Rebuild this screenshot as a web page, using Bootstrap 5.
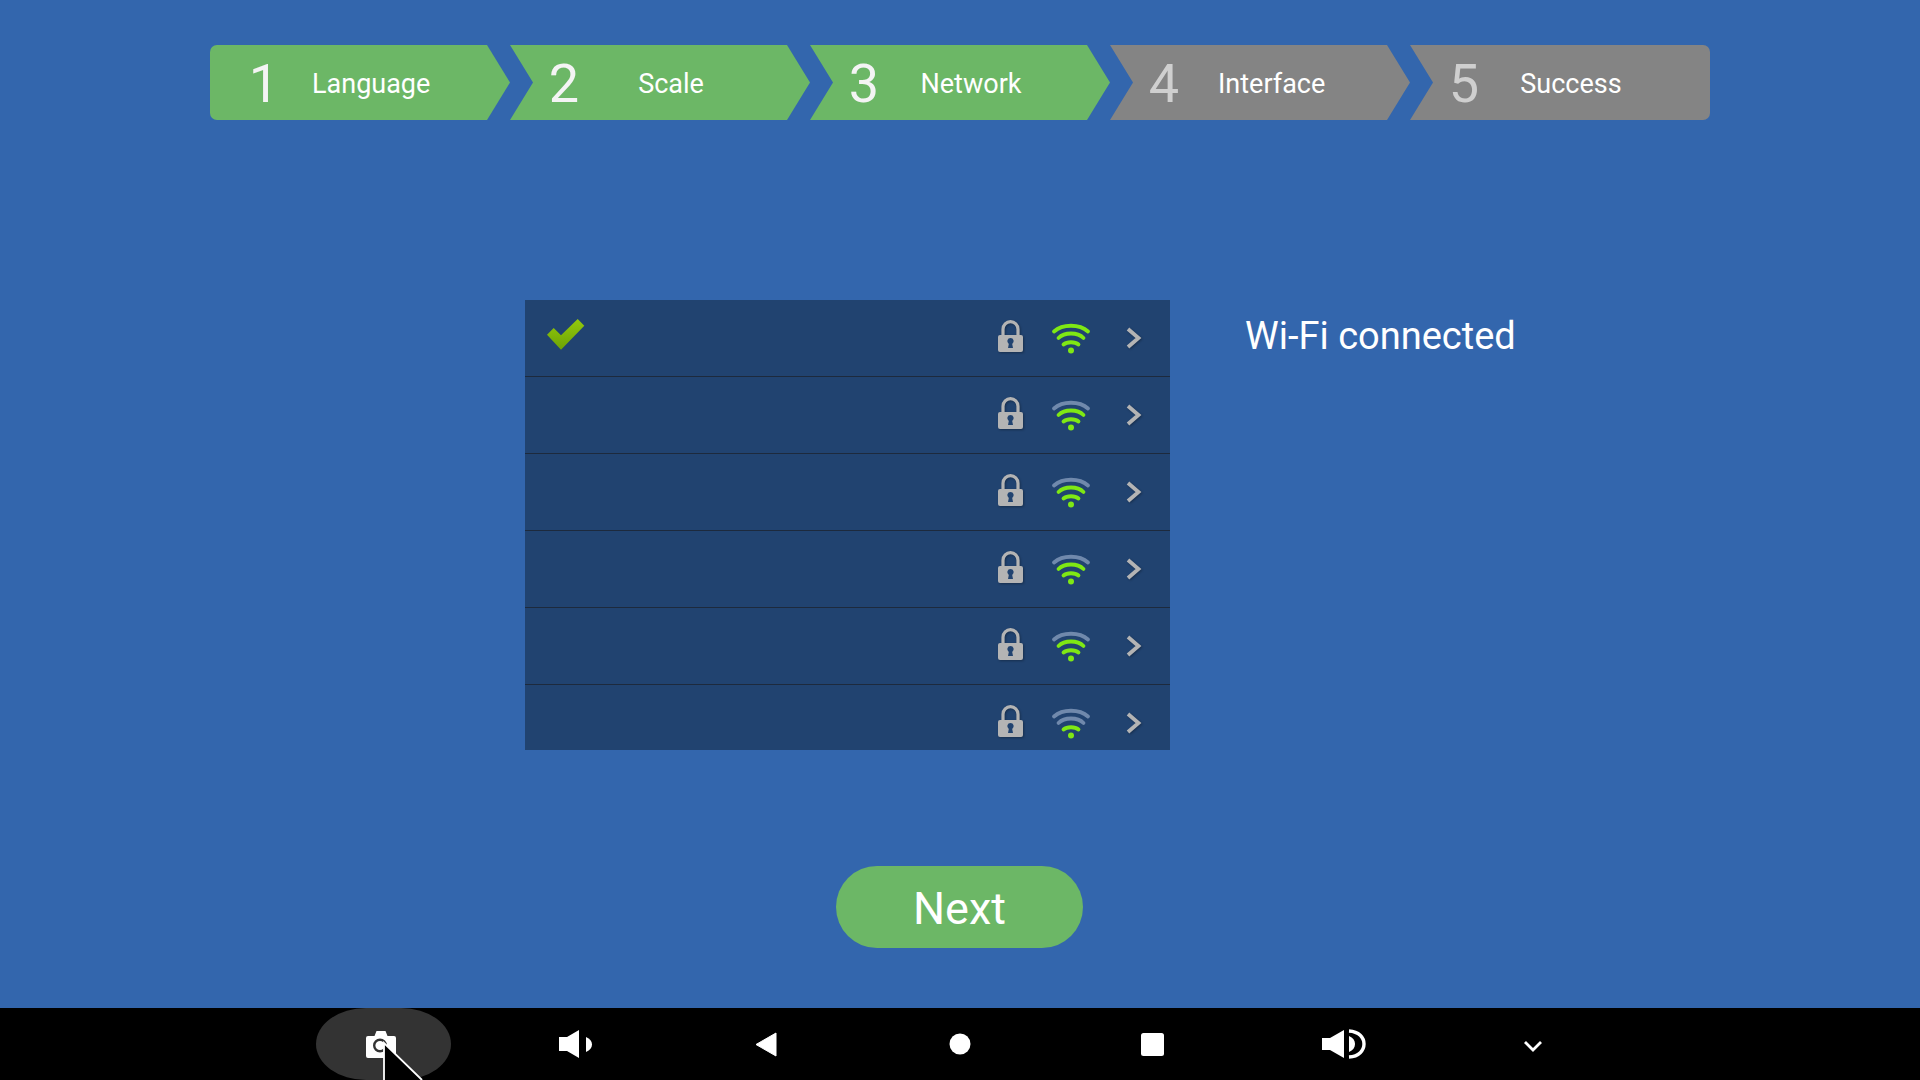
<!DOCTYPE html>
<html lang="en">
<head>
<meta charset="utf-8">
<title>Setup wizard - Network</title>
<link href="https://cdn.jsdelivr.net/npm/bootstrap@5.3.0/dist/css/bootstrap.min.css" rel="stylesheet">
<style>
html,body{height:100%}
body{background:#3366ad;font-family:Roboto,"Liberation Sans",sans-serif;overflow:hidden}
.wiz-page{height:1080px}
.wiz-steps{width:1500px;margin-top:45px}
.wiz-step{width:300px;height:75px;background:#6cb766;clip-path:polygon(0 0,277px 0,100% 50%,277px 100%,0 100%,23px 50%)}
.wiz-step.todo{background:#848484}
.wiz-step.todo .wiz-num{color:#cfcfcf}
.wiz-step:first-child{border-radius:7px 0 0 7px;clip-path:polygon(0 0,277px 0,100% 50%,277px 100%,0 100%)}
.wiz-step:last-child{border-radius:0 7px 7px 0;clip-path:polygon(0 0,100% 0,100% 100%,0 100%,23px 50%)}
.wiz-num{width:108px;font-size:54px;font-weight:400;line-height:77px;color:#f4f4f4}
.wiz-label{width:106px;font-size:27px;white-space:nowrap;line-height:79px}
.wiz-step:first-child .wiz-label{margin-left:-6px}
.wiz-mid{margin-top:180px;padding-left:525px}
.wifi-list{width:645px;height:450px;background:#214370;overflow:hidden}
.wifi-list .wifi-row{height:77px;flex:none;background:#214370;border-width:0 0 1px;border-style:solid;border-color:#1d2a3d;padding:20px 28px 0 22px}
.wifi-list .wifi-row:last-child{border-bottom:0}
.wifi-check{margin-top:-1px}
.wifi-lock{width:25px;height:32px;filter:drop-shadow(1px 1px 1px rgba(0,0,0,.3))}
.wifi-bars{width:40px;height:31px;margin-left:28px;margin-top:3px}
.wifi-go{width:16px;height:22px;margin-left:35px;margin-top:7px;filter:drop-shadow(1px 1px 1px rgba(0,0,0,.3))}
.arc-on{stroke:#7fe814;fill:none;stroke-width:3.8;stroke-linecap:round}
.arc-off{stroke:#7089ac;fill:none;stroke-width:3.8;stroke-linecap:round}
.wifi-status{font-size:38px;margin-left:75px;line-height:72px;white-space:nowrap}
.wiz-next{width:247px;height:82px;margin-top:116px;margin-right:1px;background:#6cb766;--bs-btn-bg:#6cb766;--bs-btn-border-width:0;--bs-btn-color:#fff;border-radius:41px;font-size:45px;line-height:82px;padding:2px 0 0}
.sys-bar{height:72px;background:#000}
.sys-btn{width:192px;height:72px;position:relative}
.sys-btn.on::before{content:"";position:absolute;left:28px;top:0;width:135px;height:72px;background:#333;border-radius:50px/36px}
.sys-btn svg{position:relative;display:block}
.sys-nudge{margin-right:6px}
.sys-cursor{position:absolute;left:381px;top:1041px}
</style>
</head>
<body>
<div class="wiz-page d-flex flex-column">
  <div class="flex-grow-1 d-flex flex-column">
    <div class="wiz-steps d-flex mx-auto text-white">
      <div class="wiz-step d-flex"><span class="wiz-num text-center">1</span><span class="wiz-label text-center">Language</span></div>
      <div class="wiz-step d-flex"><span class="wiz-num text-center">2</span><span class="wiz-label text-center">Scale</span></div>
      <div class="wiz-step d-flex"><span class="wiz-num text-center">3</span><span class="wiz-label text-center">Network</span></div>
      <div class="wiz-step todo d-flex"><span class="wiz-num text-center">4</span><span class="wiz-label text-center">Interface</span></div>
      <div class="wiz-step todo d-flex"><span class="wiz-num text-center">5</span><span class="wiz-label text-center">Success</span></div>
    </div>

    <svg width="0" height="0" class="position-absolute">
      <defs>
        <linearGradient id="chk" x1="0" y1="0" x2="0" y2="1"><stop offset="0" stop-color="#93c90c"/><stop offset="1" stop-color="#6da305"/></linearGradient>
        <symbol id="i-lock" viewBox="0 0 25 32"><path fill="none" stroke="#b4b4b4" stroke-width="3.2" d="M5 18V9.200a7.500 7.500 0 0 1 15 0V18"/><rect y="15" width="25" height="17" rx="2" fill="#b4b4b4"/><path fill="#214370" d="M12.500 18a3.200 3.200 0 0 1 1.700 5.900l.8 4.100h-5l.8-4.100a3.200 3.200 0 0 1 1.700-5.900z"/></symbol>
        <symbol id="i-go" viewBox="0 0 16 22"><path fill="none" stroke="#b4b4b4" stroke-width="3.800" d="M2 2l10.500 9L2 20"/></symbol>
      </defs>
    </svg>

    <div class="wiz-mid d-flex align-items-start text-white">
      <div class="wifi-list list-group rounded-0">
        <div class="wifi-row list-group-item d-flex align-items-start">
          <svg class="wifi-check" width="38" height="31" viewBox="0 0 38 31"><path fill="url(#chk)" d="M0 15.700L6.700 9 14 16.300 30.700 0l6.600 6.700L14 30.700z"/></svg>
          <svg class="wifi-lock ms-auto"><use href="#i-lock"/></svg>
          <svg class="wifi-bars" viewBox="0 0 40 31"><path class="arc-on" d="M3 8.500C11.500 .8 28.500 .8 37 8.500"/><path class="arc-on" d="M7.500 15C13.500 9 26.500 9 32.500 15"/><path class="arc-on" d="M12.500 21.500C16 18.500 24 18.500 27.500 21.500"/><circle cx="20" cy="27.500" r="3" fill="#7fe814"/></svg>
          <svg class="wifi-go"><use href="#i-go"/></svg>
        </div>
        <div class="wifi-row list-group-item d-flex align-items-start">
          <svg class="wifi-lock ms-auto"><use href="#i-lock"/></svg>
          <svg class="wifi-bars" viewBox="0 0 40 31"><path class="arc-off" d="M3 8.500C11.500 .8 28.500 .8 37 8.500"/><path class="arc-on" d="M7.500 15C13.500 9 26.500 9 32.500 15"/><path class="arc-on" d="M12.500 21.500C16 18.500 24 18.500 27.500 21.500"/><circle cx="20" cy="27.500" r="3" fill="#7fe814"/></svg>
          <svg class="wifi-go"><use href="#i-go"/></svg>
        </div>
        <div class="wifi-row list-group-item d-flex align-items-start">
          <svg class="wifi-lock ms-auto"><use href="#i-lock"/></svg>
          <svg class="wifi-bars" viewBox="0 0 40 31"><path class="arc-off" d="M3 8.500C11.500 .8 28.500 .8 37 8.500"/><path class="arc-on" d="M7.500 15C13.500 9 26.500 9 32.500 15"/><path class="arc-on" d="M12.500 21.500C16 18.500 24 18.500 27.500 21.500"/><circle cx="20" cy="27.500" r="3" fill="#7fe814"/></svg>
          <svg class="wifi-go"><use href="#i-go"/></svg>
        </div>
        <div class="wifi-row list-group-item d-flex align-items-start">
          <svg class="wifi-lock ms-auto"><use href="#i-lock"/></svg>
          <svg class="wifi-bars" viewBox="0 0 40 31"><path class="arc-off" d="M3 8.500C11.500 .8 28.500 .8 37 8.500"/><path class="arc-on" d="M7.500 15C13.500 9 26.500 9 32.500 15"/><path class="arc-on" d="M12.500 21.500C16 18.500 24 18.500 27.500 21.500"/><circle cx="20" cy="27.500" r="3" fill="#7fe814"/></svg>
          <svg class="wifi-go"><use href="#i-go"/></svg>
        </div>
        <div class="wifi-row list-group-item d-flex align-items-start">
          <svg class="wifi-lock ms-auto"><use href="#i-lock"/></svg>
          <svg class="wifi-bars" viewBox="0 0 40 31"><path class="arc-off" d="M3 8.500C11.500 .8 28.500 .8 37 8.500"/><path class="arc-on" d="M7.500 15C13.500 9 26.500 9 32.500 15"/><path class="arc-on" d="M12.500 21.500C16 18.500 24 18.500 27.500 21.500"/><circle cx="20" cy="27.500" r="3" fill="#7fe814"/></svg>
          <svg class="wifi-go"><use href="#i-go"/></svg>
        </div>
        <div class="wifi-row list-group-item d-flex align-items-start">
          <svg class="wifi-lock ms-auto"><use href="#i-lock"/></svg>
          <svg class="wifi-bars" viewBox="0 0 40 31"><path class="arc-off" d="M3 8.500C11.500 .8 28.500 .8 37 8.500"/><path class="arc-off" d="M7.500 15C13.500 9 26.500 9 32.500 15"/><path class="arc-on" d="M12.500 21.500C16 18.500 24 18.500 27.500 21.500"/><circle cx="20" cy="27.500" r="3" fill="#7fe814"/></svg>
          <svg class="wifi-go"><use href="#i-go"/></svg>
        </div>
      </div>
      <div class="wifi-status">Wi-Fi connected</div>
    </div>

    <div class="text-center">
      <button type="button" class="btn wiz-next">Next</button>
    </div>
  </div>

  <div class="sys-bar d-flex justify-content-center">
    <div class="sys-btn on d-flex align-items-center justify-content-center">
      <svg width="30" height="27" viewBox="0 0 30 27" class="sys-nudge"><path fill="#fff" d="M2 5h6.500l2-5h9l2 5H28a2 2 0 0 1 2 2v18a2 2 0 0 1-2 2H2a2 2 0 0 1-2-2V7a2 2 0 0 1 2-2z"/><circle cx="14" cy="14.500" r="5.800" fill="#fff" stroke="#333" stroke-width="2.400"/></svg>
    </div>
    <div class="sys-btn d-flex align-items-center justify-content-center">
      <svg width="34" height="28" viewBox="0 0 34 28"><path fill="#fff" d="M0 7h8L20 0v28L8 21H0z"/><path fill="#fff" d="M27 7c8 3 8 12 0 15z"/></svg>
    </div>
    <div class="sys-btn d-flex align-items-center justify-content-center">
      <svg width="22" height="25" viewBox="0 0 22 25" class="me-1"><path fill="#fff" stroke="#fff" stroke-width="1" stroke-linejoin="round" d="M1 12.500L21 1v23z"/></svg>
    </div>
    <div class="sys-btn d-flex align-items-center justify-content-center">
      <svg width="22" height="22" viewBox="0 0 22 22"><circle cx="11" cy="11" r="10.500" fill="#fff"/></svg>
    </div>
    <div class="sys-btn d-flex align-items-center justify-content-center">
      <svg width="23" height="23" viewBox="0 0 23 23"><rect width="23" height="23" rx="2.500" fill="#fff"/></svg>
    </div>
    <div class="sys-btn d-flex align-items-center justify-content-center">
      <svg width="44" height="30" viewBox="0 0 44 30"><path fill="#fff" d="M0 9h8L22 1v28L8 21H0z"/><path fill="#fff" d="M27 7c8 3 8 13 0 16z"/><path fill="none" stroke="#fff" stroke-width="3.400" d="M27 2c20 1 20 25 0 26"/></svg>
    </div>
    <div class="sys-btn d-flex align-items-center justify-content-center">
      <svg width="18" height="11" viewBox="0 0 18 11" class="sys-nudge mt-1"><path fill="none" stroke="#fff" stroke-width="2.800" d="M1 1l8 8 8-8"/></svg>
    </div>
  </div>
</div>
<svg class="sys-cursor" width="45" height="39" viewBox="0 0 45 39"><path fill="#000" stroke="#fff" stroke-width="1.800" d="M3 39V2L41 39"/></svg>
</body>
</html>
